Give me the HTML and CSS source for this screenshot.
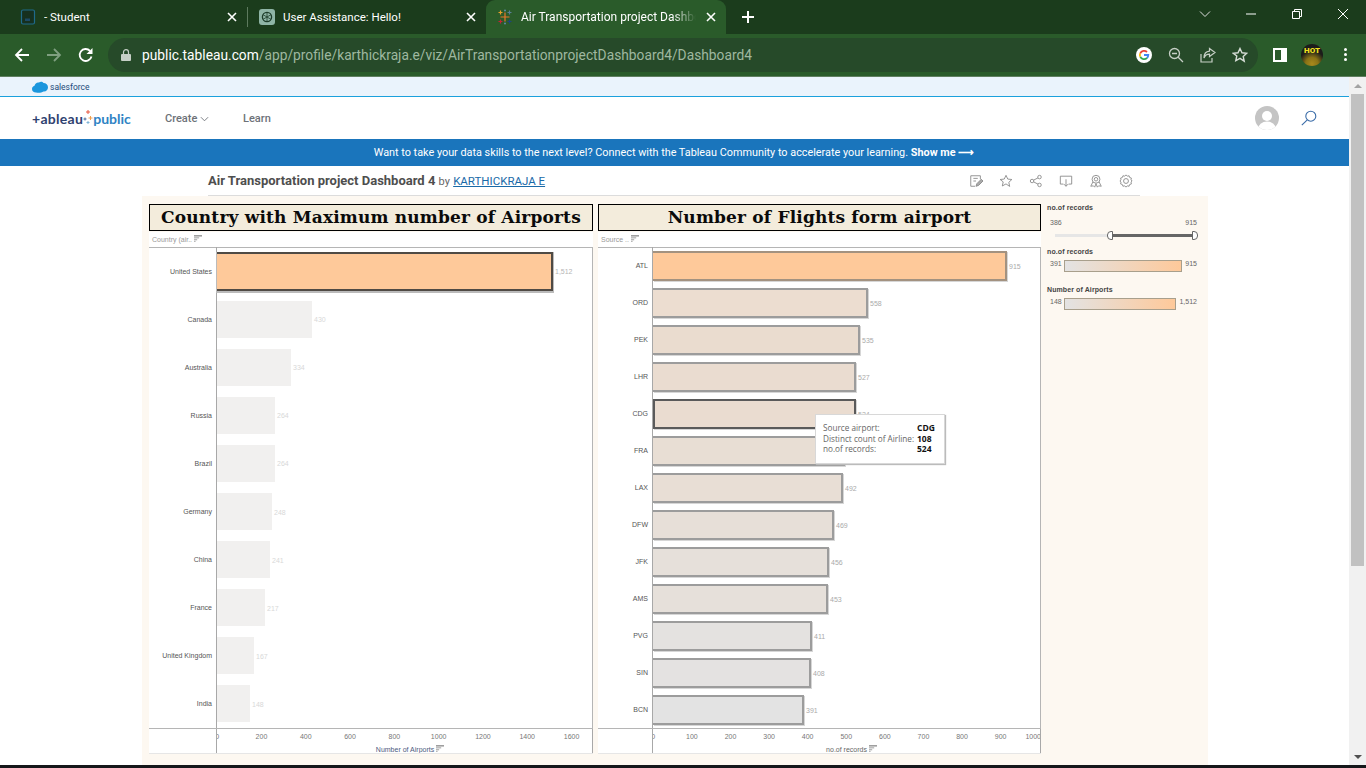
FILE: index.html
```html
<!DOCTYPE html>
<html lang="en">
<head>
  <meta charset="UTF-8">
  <title>Air Transportation project Dashboard 4</title>
  <link rel="stylesheet" href="styles.css">
</head>
<body>
  <svg class="defs" width="0" height="0">
    <symbol id="sort" viewBox="0 0 10 8">
      <rect x="0" y="0" width="10" height="1.4" fill="#777"/>
      <rect x="0" y="2.6" width="6.5" height="1.2" fill="#999"/>
      <rect x="0" y="5" width="4" height="1.2" fill="#999"/>
      <rect x="0" y="7" width="2" height="1" fill="#999"/>
    </symbol>
    <symbol id="tab-x" viewBox="0 0 10 10">
      <path d="M1 1l8 8M9 1l-8 8" stroke="#fff" stroke-width="1.6" fill="none"/>
    </symbol>
  </svg>

  <div class="tabstrip">
    <div class="tab tab-first">
      <svg class="favicon" viewBox="0 0 16 16"><rect x="1.500" y="1" width="13" height="14" rx="1.500" fill="#16301f" stroke="#1f6a8a" stroke-width="1.200"/><rect x="5" y="9.500" width="5" height="2.500" fill="#1d4a66"/></svg>
      <span class="tab-title">- Student</span>
      <svg class="tab-close"><use href="#tab-x"/></svg>
    </div>
    <div class="tab-sep"></div>
    <div class="tab tab-second">
      <svg class="favicon" viewBox="0 0 16 16"><rect width="16" height="16" rx="3" fill="#8fb5a6"/><circle cx="8" cy="8" r="4.6" fill="none" stroke="#1d3d2a" stroke-width="1.3"/><path d="M8 3.4v9M4 5.7l8 4.6M12 5.7l-8 4.6" stroke="#1d3d2a" stroke-width=".8"/></svg>
      <span class="tab-title">User Assistance: Hello!</span>
      <svg class="tab-close"><use href="#tab-x"/></svg>
    </div>
    <div class="tab tab-active">
      <svg class="favicon" viewBox="0 0 16 16" fill="none" stroke-width="1.2"><path d="M8 3.5v9M3.5 8h9" stroke="#e8762b"/><path d="M3.5 1.5v4M1.5 3.5h4" stroke="#e8a02b"/><path d="M12.5 1.5v4M10.5 3.5h4" stroke="#5b7f95"/><path d="M3.5 10.5v4M1.5 12.5h4" stroke="#c72035"/><path d="M12.5 10.5v4M10.5 12.5h4" stroke="#1f447e"/><path d="M8 .5v2M7 1.5h2M8 13.5v2M7 14.500h2" stroke="#5b879b"/></svg>
      <span class="tab-title tab-title-fade">Air Transportation project Dashboard 4</span>
      <svg class="tab-close"><use href="#tab-x"/></svg>
    </div>
    <svg class="new-tab" viewBox="0 0 12 12"><path d="M6 0v12M0 6h12" stroke="#fff" stroke-width="2"/></svg>
    <div class="window-controls">
      <svg viewBox="0 0 12 12"><path d="M1 3.500l5 5 5-5" stroke="#ddd" fill="none"/></svg>
      <svg viewBox="0 0 12 12"><path d="M1 6h10" stroke="#fff"/></svg>
      <svg viewBox="0 0 12 12"><path d="M1.500 3.500h7v7h-7zM3.500 3.500v-2h7v7h-2" stroke="#fff" fill="none"/></svg>
      <svg viewBox="0 0 12 12"><path d="M1 1l10 10M11 1l-10 10" stroke="#fff" fill="none"/></svg>
    </div>
  </div>

  <div class="toolbar">
    <svg class="nav-icon back" viewBox="0 0 16 16"><path d="M15 8H2M8 2L2 8l6 6" stroke="#fff" stroke-width="1.8" fill="none"/></svg>
    <svg class="nav-icon forward" viewBox="0 0 16 16"><path d="M1 8h13M8 2l6 6-6 6" stroke="#7f9f80" stroke-width="1.8" fill="none"/></svg>
    <svg class="nav-icon reload" viewBox="0 0 16 16"><path d="M13.500 9.500A6 6 0 1 1 12 3.800" stroke="#fff" stroke-width="1.8" fill="none"/><path d="M14.500 1v6h-6z" fill="#fff"/></svg>
    <div class="omnibox">
      <svg class="lock" viewBox="0 0 10 12"><rect y="5" width="10" height="7" rx="1" fill="#c6cfc6"/><path d="M2.500 5V3.200a2.500 2.500 0 0 1 5 0V5" stroke="#c6cfc6" stroke-width="1.200" fill="none"/></svg>
      <div class="url"><span class="url-host">public.tableau.com</span>/app/profile/karthickraja.e/viz/AirTransportationprojectDashboard4/Dashboard4</div>
      <svg class="g-icon" viewBox="0 0 16 16"><circle cx="8" cy="8" r="8" fill="#fff"/><path d="M8 8h4.300a4.300 4.300 0 0 1-1.300 3" stroke="#4285f4" stroke-width="1.800" fill="none"/><path d="M11 11a4.300 4.300 0 0 1-6.800-1.300" stroke="#34a853" stroke-width="1.800" fill="none"/><path d="M4.200 9.700a4.300 4.300 0 0 1 0-3.400" stroke="#fbbc05" stroke-width="1.800" fill="none"/><path d="M4.200 6.300A4.300 4.300 0 0 1 11 5" stroke="#ea4335" stroke-width="1.800" fill="none"/></svg>
      <svg class="omni-icon" viewBox="0 0 16 16" fill="none" stroke="#c6cfc6" stroke-width="1.300"><circle cx="6.500" cy="6.500" r="5"/><path d="M10.200 10.200L15 15M4 6.500h5"/></svg>
      <svg class="omni-icon" viewBox="0 0 16 16" fill="none" stroke="#c6cfc6" stroke-width="1.200"><path d="M1 7v8h11v-4"/><path d="M9.500 1.500L15 5.500 9.500 9.500V7.200C6.500 7.200 5 8.500 4 11c0-4 2-6.500 5.500-6.800z"/></svg>
      <svg class="omni-icon" viewBox="0 0 16 16" fill="none" stroke="#d5dcd5" stroke-width="1.400"><path d="M8 1.500l2 4.300 4.700.5-3.500 3.200 1 4.700L8 11.300l-4.200 2.400 1-4.700L1.300 6.300 6 5.800z"/></svg>
    </div>
    <svg class="side-panel" viewBox="0 0 14 14"><path d="M0 0h14v14H0zM2 2v10h6V2z" fill="#fff" fill-rule="evenodd"/></svg>
    <div class="profile"><span class="profile-text">HOT</span></div>
    <div class="chrome-menu"><i></i><i></i><i></i></div>
  </div>

  <div class="page">
    <div class="page-main">
      <div class="sf-bar">
        <svg class="sf-cloud" viewBox="0 0 16 12"><path d="M4 11.500C1.500 11.500 0 10 0 8c0-1.600 1-2.800 2.500-3.200C3 2.500 5 1 7 1.500 8.300.5 10.500.5 11.500 2 14 2 16 3.800 16 6.300 16 9 14 10.800 11.500 10.500 9.500 12 6 12 4 11.500z" fill="#1b96dd"/></svg>
        <span class="sf-name">salesforce</span>
      </div>
      <div class="site-nav">
        <div class="logo">
          <span class="logo-tableau">+ableau</span>
          <svg class="logo-mark" viewBox="0 0 10 14"><path d="M5 0v4M3 2h4" stroke="#e8563f"/><path d="M2 7.500v3M.5 9h3" stroke="#4d6a9a"/><path d="M7.500 6v4M5.500 8h4" stroke="#f0a050"/><path d="M5 11v3M3.500 12.500h3" stroke="#7fb5d8"/></svg>
          <span class="logo-public">public</span>
        </div>
        <span class="nav-link nav-create">Create <svg class="caret" viewBox="0 0 10 6"><path d="M1 1l4 4 4-4" stroke="#6d7278" fill="none"/></svg></span>
        <span class="nav-link">Learn</span>
        <div class="nav-right">
          <svg class="avatar" viewBox="0 0 24 24"><defs><clipPath id="avatar-clip"><circle cx="12" cy="12" r="12"/></clipPath></defs><circle cx="12" cy="12" r="12" fill="#c4c4c4"/><g clip-path="url(#avatar-clip)" fill="#fff"><circle cx="12" cy="10" r="5"/><ellipse cx="12" cy="23" rx="9" ry="7.500"/></g></svg>
          <svg class="search" viewBox="0 0 16 16" fill="none" stroke="#3a6ca8" stroke-width="1.100"><circle cx="9.800" cy="6.200" r="5"/><path d="M6.300 9.800L.8 15.200"/></svg>
        </div>
      </div>
      <div class="banner">Want to take your data skills to the next level? Connect with the Tableau Community to accelerate your learning.&nbsp;<b>Show me ⟶</b></div>

      <div class="title-row">
        <div class="title-text"><b>Air Transportation project Dashboard 4</b> <span class="title-by">by</span> <a class="title-author">KARTHICKRAJA E</a></div>
        <div class="title-actions">
          <svg viewBox="0 0 16 16" fill="none" stroke="#888"><path d="M13 6V2H2v12h5"/><path d="M5 5h5M5 8h3"/><path d="M8 14l1-3 5-5 2 2-5 5z" fill="#aaa"/></svg>
          <svg viewBox="0 0 16 16" fill="none" stroke="#888"><path d="M8 1.500l2 4.300 4.700.5-3.500 3.200 1 4.700L8 11.300l-4.200 2.400 1-4.700L1.300 6.300 6 5.800z"/></svg>
          <svg viewBox="0 0 16 16" fill="none" stroke="#888"><circle cx="3.500" cy="8" r="2"/><circle cx="12" cy="3.500" r="2"/><circle cx="12" cy="12.500" r="2"/><path d="M5.300 7l5-2.600M5.300 9l5 2.600"/></svg>
          <svg viewBox="0 0 16 16" fill="none" stroke="#888"><path d="M5 11.500H1.500v-9h13v9H11"/><path d="M8 6v8M5.500 11.500L8 14l2.500-2.500"/></svg>
          <svg viewBox="0 0 16 16" fill="none" stroke="#888"><circle cx="8" cy="6" r="4.500"/><circle cx="8" cy="6" r="2"/><path d="M4.500 9l-2.500 5 3-.5 1.500 1.500L8 11l1.500 4 1.500-1.500 3 .5-2.500-5"/></svg>
          <svg viewBox="0 0 16 16" fill="none" stroke="#888"><circle cx="8" cy="8" r="2.800"/><path d="M8 1l1.500 1.500 2-.5.700 2 2 .7-.5 2L15 8l-1.300 1.300.5 2-2 .7-.7 2-2-.5L8 15l-1.500-1.500-2 .5-.7-2-2-.7.5-2L1 8l1.300-1.300-.5-2 2-.7.7-2 2 .5z"/></svg>
        </div>
      </div>

      <div class="viz">
        <section class="chart chart-countries">
          <h2 class="chart-title">Country with Maximum number of Airports</h2>
          <div class="chart-white">
            <div class="col-head">Country (air.. <svg class="sort-icon"><use href="#sort"/></svg></div>
            <div class="plot">
              <div class="row"><span class="row-label">United States</span><div class="row-cell"><div class="bar bar-max" style="width:336px"></div><span class="value">1,512</span></div></div>
              <div class="row"><span class="row-label">Canada</span><div class="row-cell"><div class="bar bar-faded" style="width:95px"></div><span class="value">430</span></div></div>
              <div class="row"><span class="row-label">Australia</span><div class="row-cell"><div class="bar bar-faded" style="width:74px"></div><span class="value">334</span></div></div>
              <div class="row"><span class="row-label">Russia</span><div class="row-cell"><div class="bar bar-faded" style="width:58px"></div><span class="value">264</span></div></div>
              <div class="row"><span class="row-label">Brazil</span><div class="row-cell"><div class="bar bar-faded" style="width:58px"></div><span class="value">264</span></div></div>
              <div class="row"><span class="row-label">Germany</span><div class="row-cell"><div class="bar bar-faded" style="width:55px"></div><span class="value">248</span></div></div>
              <div class="row"><span class="row-label">China</span><div class="row-cell"><div class="bar bar-faded" style="width:53px"></div><span class="value">241</span></div></div>
              <div class="row"><span class="row-label">France</span><div class="row-cell"><div class="bar bar-faded" style="width:48px"></div><span class="value">217</span></div></div>
              <div class="row"><span class="row-label">United Kingdom</span><div class="row-cell"><div class="bar bar-faded" style="width:37px"></div><span class="value">167</span></div></div>
              <div class="row"><span class="row-label">India</span><div class="row-cell"><div class="bar bar-faded" style="width:33px"></div><span class="value">148</span></div></div>
            </div>
            <div class="axis">
              <div class="axis-ticks ticks-airports"><span>0</span><span>200</span><span>400</span><span>600</span><span>800</span><span>1000</span><span>1200</span><span>1400</span><span>1600</span></div>
              <div class="axis-title">Number of Airports <svg class="sort-icon"><use href="#sort"/></svg></div>
            </div>
          </div>
        </section>

        <section class="chart chart-flights">
          <h2 class="chart-title">Number of Flights form airport</h2>
          <div class="chart-white">
            <div class="col-head">Source .. <svg class="sort-icon"><use href="#sort"/></svg></div>
            <div class="plot">
              <div class="row"><span class="row-label">ATL</span><div class="row-cell"><div class="bar bar-top" style="width:354px;background:rgb(254,201,154)"></div><span class="value">915</span></div></div>
              <div class="row"><span class="row-label">ORD</span><div class="row-cell"><div class="bar bar-flight" style="width:215px;background:rgb(236,221,208)"></div><span class="value">558</span></div></div>
              <div class="row"><span class="row-label">PEK</span><div class="row-cell"><div class="bar bar-flight" style="width:207px;background:rgb(234,220,207)"></div><span class="value">535</span></div></div>
              <div class="row"><span class="row-label">LHR</span><div class="row-cell"><div class="bar bar-flight" style="width:203px;background:rgb(234,220,208)"></div><span class="value">527</span></div></div>
              <div class="row"><span class="row-label">CDG</span><div class="row-cell"><div class="bar bar-hover" style="width:203px;background:rgb(234,220,208)"></div><span class="value">524</span></div></div>
              <div class="row"><span class="row-label">FRA</span><div class="row-cell"><div class="bar bar-flight" style="width:192px;background:rgb(232,222,212)"></div><span class="value">497</span></div></div>
              <div class="row"><span class="row-label">LAX</span><div class="row-cell"><div class="bar bar-flight" style="width:190px;background:rgb(232,222,213)"></div><span class="value">492</span></div></div>
              <div class="row"><span class="row-label">DFW</span><div class="row-cell"><div class="bar bar-flight" style="width:181px;background:rgb(231,223,216)"></div><span class="value">469</span></div></div>
              <div class="row"><span class="row-label">JFK</span><div class="row-cell"><div class="bar bar-flight" style="width:176px;background:rgb(230,224,218)"></div><span class="value">456</span></div></div>
              <div class="row"><span class="row-label">AMS</span><div class="row-cell"><div class="bar bar-flight" style="width:175px;background:rgb(230,224,218)"></div><span class="value">453</span></div></div>
              <div class="row"><span class="row-label">PVG</span><div class="row-cell"><div class="bar bar-flight" style="width:159px;background:rgb(228,226,224)"></div><span class="value">411</span></div></div>
              <div class="row"><span class="row-label">SIN</span><div class="row-cell"><div class="bar bar-flight" style="width:158px;background:rgb(228,226,225)"></div><span class="value">408</span></div></div>
              <div class="row"><span class="row-label">BCN</span><div class="row-cell"><div class="bar bar-flight" style="width:151px;background:rgb(227,227,227)"></div><span class="value">391</span></div></div>
            </div>
            <div class="axis">
              <div class="axis-ticks ticks-records"><span>0</span><span>100</span><span>200</span><span>300</span><span>400</span><span>500</span><span>600</span><span>700</span><span>800</span><span>900</span><span>1000</span></div>
              <div class="axis-title">no.of records <svg class="sort-icon"><use href="#sort"/></svg></div>
            </div>
          </div>
        </section>

        <aside class="legends">
          <div class="legend-title">no.of records</div>
          <div class="slider-values"><span>386</span><span>915</span></div>
          <div class="slider">
            <div class="slider-off"></div>
            <div class="slider-handle"></div>
            <div class="slider-on"></div>
            <div class="slider-handle slider-handle-end"></div>
          </div>
          <div class="legend-title legend-colour">no.of records</div>
          <div class="legend-row"><span class="legend-min">391</span><div class="ramp"></div><span class="legend-max">915</span></div>
          <div class="legend-title legend-airports">Number of Airports</div>
          <div class="legend-row"><span class="legend-min">148</span><div class="ramp"></div><span class="legend-max">1,512</span></div>
        </aside>

        <div class="tooltip">
          <span class="tip-key">Source airport:</span><b class="tip-val">CDG</b>
          <span class="tip-key">Distinct count of Airline:</span><b class="tip-val">108</b>
          <span class="tip-key">no.of records:</span><b class="tip-val">524</b>
        </div>
      </div>
    </div>

    <div class="scrollbar">
      <div class="scroll-btn"><i class="arrow-up"></i></div>
      <div class="scroll-thumb"></div>
      <div class="scroll-btn scroll-btn-down"><i class="arrow-down"></i></div>
    </div>
  </div>

  <div class="taskbar"></div>
</body>
</html>
```

FILE: styles.css
```css
* {
  box-sizing: border-box;
}
html, body {
  margin: 0;
  height: 768px;
  overflow: hidden;
}
body {
  display: flex;
  flex-direction: column;
  font-family: Roboto, "Liberation Sans", sans-serif;
  background: #fff;
}
.defs {
  position: absolute;
}

/* browser chrome */
.tabstrip {
  height: 34px;
  display: flex;
  align-items: stretch;
  background: #1b3c1c;
  color: #fff;
  font-size: 11.5px;
}
.tab {
  display: flex;
  align-items: center;
  position: relative;
  width: 240px;
}
.tab-first {
  padding-left: 20px;
  width: 247px;
}
.tab-second {
  padding-left: 11px;
  width: 238px;
}
.tab-active {
  background: #2a5b2a;
  border-radius: 9px 9px 0 0;
  padding-left: 11px;
  font-size: 12px;
}
.tab-sep {
  width: 1px;
  height: 20px;
  margin-top: 7px;
  background: #5d7a5e;
}
.favicon {
  width: 16px;
  height: 16px;
  flex: none;
  margin-right: 8px;
}
.tab-title {
  flex: 1;
  white-space: nowrap;
  overflow: hidden;
}
.tab-title-fade {
  -webkit-mask-image: linear-gradient(to left, transparent 0, #000 24px);
  mask-image: linear-gradient(to left, transparent 0, #000 24px);
}
.tab-close {
  width: 10px;
  height: 10px;
  flex: none;
  margin: 0 10px;
}
.new-tab {
  width: 12px;
  height: 12px;
  margin: 11px 0 0 16px;
}
.window-controls {
  margin-left: auto;
  display: flex;
  gap: 34px;
  padding: 8px 17px 0 0;
}
.window-controls svg {
  width: 12px;
  height: 12px;
}
.toolbar {
  height: 43px;
  display: flex;
  align-items: center;
  background: #2a5b2a;
  border-bottom: 1px solid #5f7f60;
  padding: 0 0 1px 14px;
}
.nav-icon {
  width: 16px;
  height: 16px;
  flex: none;
}
.forward {
  margin-left: 16px;
}
.reload {
  margin-left: 16px;
}
.omnibox {
  margin-left: 14px;
  width: 1150px;
  height: 34px;
  border-radius: 17px;
  background: #264a29;
  display: flex;
  align-items: center;
  padding-left: 13px;
}
.lock {
  width: 10px;
  height: 12px;
  flex: none;
}
.url {
  margin-left: 11px;
  flex: 1;
  font-size: 13.77px;
  color: #9fb8a0;
  white-space: nowrap;
}
.url-host {
  color: #fff;
}
.g-icon {
  width: 16px;
  height: 16px;
  margin-right: 16px;
}
.omni-icon {
  width: 16px;
  height: 16px;
  margin-right: 16px;
}
.omni-icon:last-child {
  margin-right: 10px;
}
.side-panel {
  width: 14px;
  height: 14px;
  margin-left: 15px;
}
.profile {
  width: 22px;
  height: 22px;
  border-radius: 50%;
  margin-left: 14px;
  background: radial-gradient(circle at 50% 90%, #a8891c 0, #8a7316 28%, #1c1c1a 58%);
  display: flex;
  justify-content: center;
  overflow: hidden;
}
.profile-text {
  font-size: 8px;
  font-weight: 900;
  color: #f0e020;
  margin-top: 2px;
}
.chrome-menu {
  margin-left: 21px;
  display: flex;
  flex-direction: column;
  gap: 2px;
}
.chrome-menu i {
  width: 3px;
  height: 3px;
  background: #fff;
  border-radius: 50%;
}

/* page */
.page {
  flex: 1;
  display: flex;
  min-height: 0;
}
.page-main {
  flex: 1;
  min-width: 0;
}
.scrollbar {
  width: 17px;
  background: #f1f1f1;
  display: flex;
  flex-direction: column;
}
.scroll-btn {
  height: 17px;
  display: flex;
  justify-content: center;
  align-items: center;
}
.scroll-btn-down {
  margin-top: auto;
}
.arrow-up, .arrow-down {
  width: 0;
  height: 0;
  border-left: 4px solid transparent;
  border-right: 4px solid transparent;
}
.arrow-up {
  border-bottom: 4px solid #a3a3a3;
}
.arrow-down {
  border-top: 4px solid #505050;
}
.scroll-thumb {
  height: 472px;
  margin: 0 2px;
  background: #c1c1c1;
}
.sf-bar {
  height: 20px;
  background: #eaf3fc;
  border-bottom: 1px solid #1ba0dc;
  display: flex;
  align-items: center;
  padding-left: 32px;
}
.sf-cloud {
  width: 16px;
  height: 12px;
}
.sf-name {
  font-size: 8.500px;
  color: #1c4a7a;
  margin-left: 2px;
}
.site-nav {
  height: 42px;
  display: flex;
  align-items: center;
  padding-left: 32px;
  font-size: 11px;
  color: #6d7278;
}
.logo {
  display: flex;
  align-items: center;
  width: 133px;
  font-family: Lato, Roboto, sans-serif;
  font-size: 14px;
  font-weight: 700;
}
.logo-tableau {
  color: #2f4270;
  letter-spacing: .3px;
}
.logo-public {
  color: #2f83c4;
}
.logo-mark {
  width: 10px;
  height: 14px;
  margin: -2px 0 0;
}
.nav-link {
  font-weight: 500;
  margin-right: 32px;
}
.nav-create {
  width: 46px;
}
.caret {
  width: 9px;
  height: 6px;
}
.nav-right {
  margin-left: auto;
  display: flex;
  align-items: center;
  gap: 22px;
  padding-right: 32px;
}
.avatar {
  width: 24px;
  height: 24px;
}
.search {
  width: 16px;
  height: 16px;
}
.banner {
  height: 27px;
  background: #1a75bc;
  color: #fff;
  font-size: 10.850px;
  display: flex;
  align-items: center;
  justify-content: center;
  padding-right: 1px;
}
.title-row {
  height: 30px;
  margin-left: 208px;
  width: 932px;
  border-bottom: 1px solid #dcdcdc;
  display: flex;
  align-items: center;
  justify-content: space-between;
  font-size: 13px;
  color: #4e4e4e;
}
.title-by {
  font-size: 11px;
  color: #666;
}
.title-author {
  font-size: 11.5px;
  color: #1a6aa8;
  text-decoration: underline;
}
.title-actions {
  display: flex;
  gap: 16px;
  padding-right: 7px;
}
.title-actions svg {
  width: 14px;
  height: 14px;
}

/* viz */
.viz {
  position: relative;
  margin-left: 142px;
  width: 1066px;
  height: 569px;
  background: #fdf8f1;
  padding: 8px 0 0 7px;
  display: flex;
  align-items: flex-start;
}
.chart {
  width: 444px;
  flex: none;
}
.chart-flights {
  margin-left: 5px;
  width: 443px;
}
.chart-title {
  margin: 0;
  height: 27px;
  border: 1px solid #000;
  background: #f3ecdc;
  font-family: "DejaVu Serif", "Liberation Serif", serif;
  font-size: 17px;
  line-height: 25px;
  font-weight: 700;
  letter-spacing: .17px;
  text-align: center;
  color: #0a0a0a;
  white-space: nowrap;
}
.chart-white {
  margin-top: 1px;
  height: 522px;
  background: #fff;
  border-bottom: 1px solid #e6e6e6;
  display: flex;
  flex-direction: column;
}
.col-head {
  height: 15px;
  padding: 3px 0 0 3px;
  font-family: "Liberation Sans", Arial, sans-serif;
  font-size: 7px;
  color: #999;
  white-space: nowrap;
}
.sort-icon {
  width: 8px;
  height: 7px;
  vertical-align: 0;
}
.plot {
  height: 482px;
  border-right: 1px solid #b5b5b5;
  border-bottom: 1px solid #b5b5b5;
  box-shadow: inset 0 1px 0 #b5b5b5;
  display: flex;
  flex-direction: column;
  font-family: "Liberation Sans", Arial, sans-serif;
  font-size: 7px;
}
.row {
  flex: 1;
  display: flex;
  min-height: 0;
}
.row-label {
  width: 67px;
  flex: none;
  align-self: center;
  text-align: right;
  padding-right: 4px;
  color: #555;
  white-space: nowrap;
}
.chart-flights .row-label {
  width: 54px;
}
.row-cell {
  flex: 1;
  display: flex;
  align-items: center;
  border-left: 1px solid #a8a8a8;
}
.bar {
  flex: none;
}
.bar-max {
  height: 39px;
  background: #fec99a;
  border: 2px solid #4f4a44;
  border-left: 0;
  box-shadow: 0 1px 0 1px #bbb;
}
.bar-faded {
  height: 37px;
  background: #f1f0ef;
}
.bar-top, .bar-flight, .bar-hover {
  height: 30px;
  border: 2px solid #9c9c9c;
  border-left: 0;
  box-shadow: 1px 1px 0 #d6d6d6;
}
.bar-top {
  border-color: #a39280;
}
.bar-hover {
  border: 2px solid #5a5a5a;
}
.value {
  margin: 1px 0 0 2px;
  color: #aaa;
}
.chart-countries .value {
  color: #d8d8d8;
}
.chart-countries .bar-max + .value {
  color: #b5b5b5;
}
.axis {
  flex: 1;
  margin-left: 67px;
  border-left: 1px solid #a8a8a8;
  border-right: 1px solid #a8a8a8;
  font-family: "Liberation Sans", Arial, sans-serif;
  font-size: 7px;
  line-height: 8px;
  color: #777;
  overflow: hidden;
}
.axis-ticks {
  display: flex;
  margin-top: 4px;
}
.axis-ticks span {
  flex: none;
  text-align: center;
}
.ticks-airports {
  margin-left: -22px;
}
.ticks-airports span {
  width: 44.3px;
}
.ticks-records {
  margin-left: -19px;
}
.ticks-records span {
  width: 38.6px;
}
.ticks-records span:last-child {
  margin-left: -6px;
}
.chart-flights .axis {
  margin-left: 54px;
}
.axis-title {
  margin-top: 4px;
  padding-left: 10px;
  text-align: center;
  color: #666;
}
.chart-countries .axis-title {
  color: #4d5a80;
  padding-left: 11px;
}

/* legends */
.legends {
  width: 160px;
  margin-left: 6px;
  font-family: "Liberation Sans", Arial, sans-serif;
  font-size: 7px;
  color: #666;
}
.legend-title {
  font-weight: 700;
  color: #444;
  line-height: 8px;
  letter-spacing: .1px;
}
.slider-values {
  display: flex;
  justify-content: space-between;
  width: 150px;
  padding-left: 3px;
  margin-top: 7px;
  line-height: 8px;
}
.slider {
  display: flex;
  align-items: center;
  width: 143px;
  margin: 4px 0 0 8px;
  height: 9px;
}
.slider-off {
  width: 52px;
  height: 3px;
  background: #e6e6e6;
}
.slider-on {
  flex: 1;
  height: 3px;
  background: #666;
}
.slider-handle {
  width: 6px;
  height: 9px;
  border: 1px solid #666;
  border-radius: 4px 0 0 4px;
  background: #fff;
}
.slider-handle-end {
  border-radius: 0 4px 4px 0;
}
.legend-colour {
  margin-top: 8px;
}
.legend-airports {
  margin-top: 14px;
}
.legend-row {
  display: flex;
  align-items: flex-start;
  margin-top: 4px;
  width: 150px;
}
.legend-min {
  width: 17px;
  flex: none;
  padding-left: 3px;
  line-height: 8px;
}
.legend-max {
  margin-left: 3px;
  line-height: 8px;
}
.ramp {
  flex: 1;
  height: 12px;
  border: 1px solid #a89f8c;
  background: linear-gradient(to right, #e3e3e3, #fec99a);
}

/* tooltip */
.tooltip {
  position: absolute;
  left: 673px;
  top: 218px;
  width: 130px;
  height: 50px;
  background: #fff;
  border: 1px solid #d8d8d8;
  box-shadow: 1px 1px 1px #bbb;
  padding: 8px 0 0 7px;
  display: grid;
  grid-template-columns: 94px auto;
  grid-auto-rows: 10.5px;
  font-family: "Open Sans", "Liberation Sans", sans-serif;
  font-size: 8.200px;
  line-height: 10.5px;
}
.tip-key {
  color: #666;
  white-space: nowrap;
}
.tip-val {
  color: #111;
  font-size: 8.500px;
}

.taskbar {
  height: 3px;
  background: #15171a;
}
```
